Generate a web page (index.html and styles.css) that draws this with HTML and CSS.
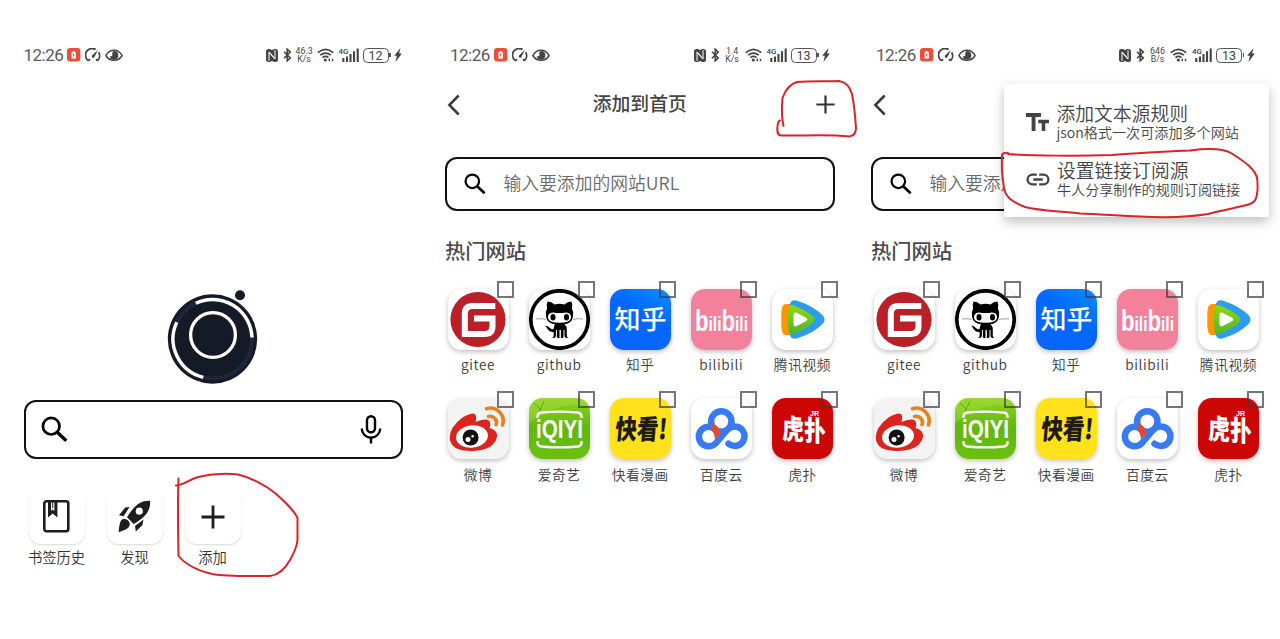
FILE: index.html
```
<!DOCTYPE html>
<html lang="zh-CN">
<head>
  <meta charset="UTF-8">
  <title>添加到首页</title>
  <meta name="viewport" content="width=device-width, initial-scale=1.0">
  <link rel="stylesheet" href="styles.css">
</head>
<body>

  <svg class="defs" width="0" height="0">
    <defs>
      <linearGradient id="g-zhihu" x1="1" y1="0" x2="0.4" y2="1">
        <stop offset="0" stop-color="#0d8dff"/><stop offset="0.5" stop-color="#0068ff"/><stop offset="1" stop-color="#0a66fb"/>
      </linearGradient>
      <linearGradient id="g-iqiyi" x1="0" y1="0" x2="0" y2="1">
        <stop offset="0" stop-color="#8fd321"/><stop offset="0.5" stop-color="#5fb80c"/><stop offset="1" stop-color="#6cc010"/>
      </linearGradient>
      <linearGradient id="g-green" x1="0" y1="0" x2="0" y2="1">
        <stop offset="0" stop-color="#93d70c"/><stop offset="1" stop-color="#4fb62c"/>
      </linearGradient>
    </defs>

    <!-- status bar -->
    <symbol id="i-lock" viewBox="0 0 14 14">
      <rect width="13.4" height="13.6" rx="3" fill="#e8503a"/>
      <path d="M5.7 3h2v1.2h1.2v6.2H4.5V4.2h1.2z" fill="#fff"/>
      <path d="M6.7 5.8v2.8" stroke="#e8503a" stroke-width="1.1"/>
    </symbol>
    <symbol id="i-gauge" viewBox="0 0 16 14">
      <path d="M3.6 12.7A6.5 6.5 0 0 1 10.6 1.5M13.6 4.3a6.5 6.5 0 0 1-1.2 8.4M3.6 12.7l1.3-1.5M12.4 12.7L11.1 11.2" fill="none" stroke="#444" stroke-width="1.8"/>
      <path d="M13 1.8L9.3 9.2A1.4 1.4 0 0 1 7 7.6z" fill="#444"/>
    </symbol>
    <symbol id="i-eye" viewBox="0 0 18 13">
      <path d="M.9 6.5C4.6-.5 13.4-.5 17.1 6.5 13.4 12.9 4.6 12.9.9 6.5z" fill="none" stroke="#444" stroke-width="1.5"/>
      <path d="M9 2.1a4.3 4.3 0 1 1-4.2 5.1c1.900.5 3-.5 2.500-2.200C7.100 3.600 7.600 2.500 9 2.100z" fill="#444"/>
    </symbol>
    <symbol id="i-nfc" viewBox="0 0 12 13">
      <rect width="12" height="13" rx="2.5" fill="#444"/>
      <path d="M3 11.8V3.2l5.800 6.900M9 1.200v8.600L3.200 2.900" fill="none" stroke="#fff" stroke-width="1"/>
      <path d="M4.500 13h3M4.500 0h3" stroke="#fff" stroke-width="1.5"/>
    </symbol>
    <symbol id="i-bt" viewBox="0 0 9 14">
      <path d="M1 3.7l6.300 6.200L4.200 12.800V1.200l3.100 2.900L1 10.300" fill="none" stroke="#444" stroke-width="1.6"/>
    </symbol>
    <symbol id="i-wifi" viewBox="0 0 17 14">
      <path d="M.8 4.600Q8.500-2 16.200 4.600M3.200 7.200q5.300-4.300 10.600 0M5.500 9.600q3-2.300 6 0" fill="none" stroke="#444" stroke-width="1.7"/>
      <circle cx="8.3" cy="12" r="1.6" fill="#444"/>
      <path d="M11 12l2-1.700v3.400zM16.800 12l-2-1.700v3.400z" fill="#444"/>
    </symbol>
    <symbol id="i-signal" viewBox="0 0 20 14">
      <path d="M4.300 10v4M8 8.500V14M11.500 6v8M15 3.200V14M18.700.5V14" stroke="#444" stroke-width="2.1"/>
    </symbol>
    <symbol id="i-bolt" viewBox="0 0 8 14">
      <path d="M6.500 0L.2 7.800h2.700L1.400 14l6.500-8.500H5.100z" fill="#444"/>
    </symbol>

    <!-- app icons -->
    <symbol id="i-search" viewBox="0 0 27 27">
      <circle cx="10.2" cy="10.2" r="8.3" fill="none" stroke="#000" stroke-width="2.7"/>
      <path d="M16.500 16.500l8.800 8.300" stroke="#000" stroke-width="3.3"/>
    </symbol>
    <symbol id="i-mic" viewBox="0 0 22 29">
      <rect x="7" y="1.3" width="8" height="16" rx="4" fill="none" stroke="#000" stroke-width="2.4"/>
      <path d="M1.800 13.500a9.200 9.200 0 0 0 18.400 0M11 22.500v6" fill="none" stroke="#000" stroke-width="2.4"/>
    </symbol>
    <symbol id="i-book" viewBox="0 0 27 33">
      <rect x="1.3" y="1.3" width="24" height="30" rx="2.2" fill="none" stroke="#1d1d1d" stroke-width="2.6"/>
      <path d="M5 1.500v16l4.700-4 4.700 4v-16z" fill="#1d1d1d"/>
      <path d="M8 2.600v8.400l1.700-1.400 1.700 1.400V2.600z" fill="#fff"/>
      <path d="M9.700 2v6" stroke="#1d1d1d" stroke-width="1"/>
    </symbol>
    <symbol id="i-rocket" viewBox="0 0 33 33">
      <path fill-rule="evenodd" d="M32 .7C23 0 16.500 5 9 17.300L15.700 24C27.500 17.500 33 10 32 .7zM21.300 7.600a3.600 3.600 0 1 1 0 7.200 3.600 3.600 0 0 1 0-7.200z" fill="#1d1d1d"/>
      <path d="M11.500 7l-4.300.5L1 15.300l4.600 1zM25.500 19.500l-8.500 6.500.8 5.500 6.500-6.200zM4 19.500C6.500 18 12 20 11.800 24.500c-.5 4.200-5.500 6-11.200 7.700C1.300 27 1.500 21.500 4 19.500z" fill="#1d1d1d"/>
    </symbol>
    <symbol id="i-plus" viewBox="0 0 24 24">
      <path d="M12 .5v23M.5 12h23" stroke="currentColor" stroke-width="2.8"/>
    </symbol>
    <symbol id="i-back" viewBox="0 0 13 22">
      <path d="M11.700 1.500L2.300 11l9.400 9.500" fill="none" stroke="#3b3b3b" stroke-width="2.5"/>
    </symbol>
    <symbol id="i-tt" viewBox="0 0 23 19">
      <path d="M0 0h15v3.900H9.500V18H5.600V3.900H0zM12.200 6.800H23v3.500h-3.700V18h-3.600v-7.700h-3.500z" fill="#444"/>
    </symbol>
    <symbol id="i-link" viewBox="0 0 24 13">
      <path d="M10.800 1.600H6.500a4.900 4.900 0 0 0 0 9.800h4.300M13.200 1.600h4.300a4.900 4.900 0 0 1 0 9.800h-4.300M7.300 6.500h9.400" fill="none" stroke="#444" stroke-width="2.3"/>
    </symbol>

    <!-- site logos -->
    <symbol id="s-gitee" viewBox="0 0 61 61">
      <circle cx="30" cy="30.5" r="27.6" fill="#bb2029"/>
      <path d="M47.300 17H24.500q-7.700 0-7.700 7.700V45h20q7.700 0 7.700-7.700V29.500H26" fill="none" stroke="#fff" stroke-width="6"/>
    </symbol>
    <symbol id="s-github" viewBox="0 0 61 61">
      <circle cx="30.5" cy="30.5" r="28.7" fill="#fff" stroke="#000" stroke-width="3.7"/>
      <path d="M18.500 12.500q4 .2 7 3 5-1.400 10 0 3-2.800 7-3 1.400 3.500.4 7Q45 23 44 27.500 43 34.300 35.500 35.300q2.300 2 2.300 5.200v6.500q.2 1.500 1.700 1.800-3.500.7-4-1.500V41h-1v7q-.5 1.500-2.600 1v-8h-1.400v8q-2.300.5-2.600-1v-7h-1v6.300q-.5 2.200-4 1.500 1.700-.3 1.700-1.800v-4c-5.500.8-5.500-4-8.800-6.200 5-.2 4.800 4.300 8.800 3.200q.2-3 1.400-4.700Q18 34.300 17 27.500 16 23 18.100 19.500q-1-3.500.4-7z" fill="#000"/>
      <path d="M24 23.500q6.500 1 13 0 5.300.2 5 5.200-.3 5-11.500 5t-11.500-5q-.3-5 5-5.200z" fill="#fff"/>
      <ellipse cx="24" cy="28.3" rx="2.500" ry="3.300"/><ellipse cx="37.500" cy="28.300" rx="2.500" ry="3.300"/>
      <path d="M7 30q5-.7 10 .3M54 30q-5-.7-10 .3" fill="none" stroke="#555" stroke-width=".6"/>
    </symbol>
    <symbol id="s-zhihu" viewBox="0 0 61 61">
      <rect width="61" height="61" fill="url(#g-zhihu)"/>
    </symbol>
    <symbol id="s-bili" viewBox="0 0 61 61">
      <rect width="61" height="61" fill="#f4819c"/>
    </symbol>
    <symbol id="s-tencent" viewBox="0 0 61 61">
      <path d="M13.500 15Q9.500 15 9.300 25v11q.2 10 4.200 10h6V15z" fill="#ff9600"/>
      <path d="M18 14.500q2-5 8-2.500 15 5 24.500 14 4 4.500 0 9-9.500 9.500-24.500 14-6 2.500-8-2.500-3-16 0-32z" fill="#2b9cf0"/>
      <path d="M16.500 19q1-4.500 6.500-2 10.500 4 18 10.500 3 3 0 6-7.500 6.500-18 11-5.500 2-6.500-2.500-1.500-11.500 0-23z" fill="url(#g-green)"/>
      <path d="M21.500 26q0-3.500 3.200-2.200L34.500 29q1.700 1.500 0 3l-9.800 5q-3.200 1.500-3.200-2z" fill="#fff"/>
    </symbol>
    <symbol id="s-weibo" viewBox="0 0 61 61">
      <rect width="61" height="61" fill="#f3f3f3"/>
      <path d="M21 16.500q6-2.500 7 1.500.5 3-.5 6 6-3 11-2.500 5.500 1 3 8.500 8.500 2.500 7.500 8.500Q46.500 52 25 53 3 53.500 1.700 40.500 1.500 29 14.500 19.500q3-2.200 6.500-3z" fill="#dc241f"/>
      <ellipse cx="24" cy="38.500" rx="16" ry="11.200" fill="#fff" transform="rotate(-7 24 38.500)"/>
      <circle cx="22.600" cy="39.500" r="8" fill="#111"/>
      <circle cx="20" cy="41.500" r="2.500" fill="#fff"/><circle cx="24.600" cy="38.300" r="1.200" fill="#fff"/>
      <path d="M38.500 10.700Q46 8.300 51.500 14t3 13M40.500 18.500q4-1 6.500 2.200t1 6" fill="none" stroke="#e58120" stroke-width="3.6" stroke-linecap="round"/>
    </symbol>
    <symbol id="s-iqiyi" viewBox="0 0 61 61">
      <rect width="61" height="61" fill="url(#g-iqiyi)"/>
      <path d="M0 25Q30 2 61 8V0H0z" fill="#b0e34b" opacity=".35"/>
      <path d="M5 5l7 7M15 3l-5 11" stroke="#4ca00c" stroke-width=".7"/>
      <path d="M8.500 20v-1.500q0-3.500 4-4 18-1.800 36 0 4 .5 4 4V20M8.500 43v1.500q0 3.500 4 4 18 1.800 36 0 4-.5 4-4V43" fill="none" stroke="#fff" stroke-width="2.4"/>
    </symbol>
    <symbol id="s-kuaikan" viewBox="0 0 61 61">
      <rect width="61" height="61" fill="#ffe11c"/>
    </symbol>
    <symbol id="s-baidu" viewBox="0 0 61 61">
      <circle cx="30.300" cy="23.500" r="10.200" fill="none" stroke="#367bf3" stroke-width="6.5"/>
      <path d="M37.500 45.800A9.800 9.800 0 1 0 36.500 31.500L24.500 45.500A9.800 9.800 0 1 1 24.500 31.500" fill="none" stroke="#367bf3" stroke-width="6.5" stroke-linecap="round"/>
      <path d="M20.800 25.500q7 2 9.200 9L24 41.500q-.5-6.500-3.200-9.500z" fill="#df4a32"/>
    </symbol>
    <symbol id="s-hupu" viewBox="0 0 61 61">
      <rect width="61" height="61" fill="#cc0505"/>
    </symbol>
  </svg>

  <main class="screens">

    <section class="phone home">
      <div class="status" data-speed="46.3" data-unit="K/s" data-battery="12"></div>
      <svg class="logo" viewBox="0 0 92 96">
        <circle cx="73" cy="6.3" r="5" fill="#151a27"/>
        <circle cx="45.5" cy="50" r="44.7" fill="#151a27"/>
        <circle cx="45.5" cy="50" r="39.5" fill="none" stroke="#202538" stroke-width="4"/>
        <circle cx="46" cy="46" r="22.4" fill="none" stroke="#fff" stroke-width="3.3"/>
        <path d="M28.800 14.200A39.500 39.500 0 0 1 85 48.500M9.800 33.200A39.500 39.500 0 0 0 36.300 88.400" fill="none" stroke="#fff" stroke-width="3.4"/>
      </svg>
      <div class="search search-home">
        <svg class="ico-search"><use href="#i-search"/></svg>
        <svg class="ico-mic"><use href="#i-mic"/></svg>
      </div>
      <nav class="shortcuts">
        <a class="shortcut"><span class="box"><svg width="27" height="33"><use href="#i-book"/></svg></span>书签历史</a>
        <a class="shortcut"><span class="box"><svg width="33" height="33"><use href="#i-rocket"/></svg></span>发现</a>
        <a class="shortcut"><span class="box"><svg width="24" height="24"><use href="#i-plus"/></svg></span>添加</a>
      </nav>
    </section>

    <section class="phone add">
      <div class="status" data-speed="1.4" data-unit="K/s" data-battery="13"></div>
      <header class="bar">
        <svg class="back"><use href="#i-back"/></svg>
        <h1>添加到首页</h1>
        <svg class="plus"><use href="#i-plus"/></svg>
      </header>
      <div class="search">
        <svg class="ico-search"><use href="#i-search"/></svg>
        <span>输入要添加的网站URL</span>
      </div>
      <h2>热门网站</h2>
      <div class="sites"></div>
    </section>

    <section class="phone add">
      <div class="status" data-speed="646" data-unit="B/s" data-battery="13"></div>
      <header class="bar">
        <svg class="back"><use href="#i-back"/></svg>
      </header>
      <div class="search">
        <svg class="ico-search"><use href="#i-search"/></svg>
        <span>输入要添加的网站URL</span>
      </div>
      <h2>热门网站</h2>
      <div class="sites"></div>

      <div class="menu">
        <div class="menu-item">
          <svg width="23" height="19"><use href="#i-tt"/></svg>
          <div><b>添加文本源规则</b><small>json格式一次可添加多个网站</small></div>
        </div>
        <div class="menu-item">
          <svg width="24" height="13"><use href="#i-link"/></svg>
          <div><b>设置链接订阅源</b><small>牛人分享制作的规则订阅链接</small></div>
        </div>
      </div>
    </section>

    <!-- hand-drawn marks -->
    <svg class="marks" viewBox="0 0 1280 639">
      <path d="M178.500 478.500C177.500 505 178 530 178.500 556C184 563 197 571 212 574C230 577 250 576 270 576C279 575 285 569 290 560C294 553 297 547 297.500 540V518C294 510 285 502 275 493C264 484 249 477 238 474.500C225 473 207 474 195 478C188 481 183 485 176 485.500"/>
      <path d="M783.500 126C781 115 782 104 782.500 98C785 91 790 84 797 82C810 81 825 81.500 839 81C846 82 850 87 852 94C854 104 855 113 856 128C856 133 854 136 849 136.500C827 134 803 136 781 135.500C777 135 777 131 777.500 126C778 123 778 121 780 120.500"/>
      <path d="M1008 154C1030 156 1080 156 1112 155C1140 153 1170 151 1190 150.500C1205 148.500 1222 148 1231 153C1239 158 1247 163 1252 169C1257 174 1258 178 1257.500 190C1257 197 1256 202 1250 204C1240 207 1225 210 1208 214C1190 217 1160 217.500 1140 216.500C1120 216 1100 214 1080 213.500C1060 211 1040 211 1025 207C1012 202 1004 197 1003.500 184C1001 172 1002 160 1002 155C1003 153 1005 152.500 1008 153"/>
    </svg>
  </main>

  <script>
    // id, name, lettering drawn over the tile
    const sites = [
      ["gitee", "gitee", ""],
      ["github", "github", ""],
      ["zhihu", "知乎", `<text x="30.5" y="39.5" class="t-zhihu">知乎</text>`],
      ["bili", "bilibili", `<text x="4" y="41.5" class="t-bili" textLength="53" lengthAdjust="spacingAndGlyphs"><tspan class="big">b</tspan>ili<tspan class="big">b</tspan>ili</text>`],
      ["tencent", "腾讯视频", ""],
      ["weibo", "微博", ""],
      ["iqiyi", "爱奇艺", `<text x="7" y="40" class="t-iqiyi" textLength="47" lengthAdjust="spacingAndGlyphs">iQIYI</text>`],
      ["kuaikan", "快看漫画", `<text x="8" y="41" class="t-kuaikan" textLength="52" lengthAdjust="spacingAndGlyphs" transform="skewX(-5)">快看!</text>`],
      ["baidu", "百度云", ""],
      ["hupu", "虎扑", `<text x="10" y="40" class="t-hupu" textLength="44" lengthAdjust="spacingAndGlyphs" transform="skewY(4)">虎扑</text><text x="38" y="18" class="t-jr">JR</text>`]
    ];

    document.querySelectorAll(".sites").forEach(el => {
      el.innerHTML = sites.map(([id, nome, testo]) => `
        <div class="site">
          <div class="tile"><svg><use href="#s-${id}"/>${testo}</svg></div>
          <i class="check"></i>
          <span>${nome}</span>
        </div>`).join("");
    });

    document.querySelectorAll(".status").forEach(el => {
      const { speed, unit, battery } = el.dataset;
      el.innerHTML = `
        <div class="status-left">
          <span class="time">12:26</span>
          <svg class="st-lock"><use href="#i-lock"/></svg>
          <svg class="st-gauge"><use href="#i-gauge"/></svg>
          <svg class="st-eye"><use href="#i-eye"/></svg>
        </div>
        <div class="status-right">
          <svg class="st-nfc"><use href="#i-nfc"/></svg>
          <svg class="st-bt"><use href="#i-bt"/></svg>
          <span class="speed">${speed}<br>${unit}</span>
          <svg class="st-wifi"><use href="#i-wifi"/></svg>
          <span class="signal"><em>4G</em><svg><use href="#i-signal"/></svg></span>
          <span class="battery">${battery}</span>
          <svg class="st-bolt"><use href="#i-bolt"/></svg>
        </div>`;
    });
  </script>

</body>
</html>
```
FILE: styles.css
```
* {
  box-sizing: border-box;
}

body {
  margin: 0;
  background: #fff;
  color: #444;
  font-family: "Noto Sans CJK SC", "Noto Sans", sans-serif;
  overflow: hidden;
}

svg {
  display: block;
  flex: none;
}

.defs {
  position: absolute;
}

.screens {
  position: relative;
  display: grid;
  grid-template-columns: 426.5px 426px 427.5px;
  width: 1280px;
  height: 639px;
}

.phone {
  position: relative;
  display: flex;
  flex-direction: column;
}

/* status bar */
.status {
  display: flex;
  justify-content: space-between;
  align-items: center;
  height: 20px;
  margin-top: 45px;
  padding: 0 0 0 23.5px;
}

.status-left,
.status-right {
  display: flex;
  align-items: center;
}

.status-right {
  width: 161px;
}

.add .status-right {
  width: 159px;
}

.add:last-of-type .status-right {
  width: 161px;
}

.time {
  width: 43.5px;
  font-family: Roboto, sans-serif;
  font-size: 17px;
  letter-spacing: -0.5px;
  line-height: 20px;
  color: #5a5a5a;
}

.st-lock { width: 14px; height: 14px; margin-right: 4px; }
.st-gauge { width: 16px; height: 14px; margin-right: 4px; }
.st-eye { width: 18px; height: 13px; }
.st-nfc { width: 12px; height: 13px; margin-right: 5px; }
.st-bt { width: 9px; height: 14px; margin-right: 4px; }
.st-wifi { width: 17px; height: 14px; margin-right: 5px; }
.st-bolt { width: 8px; height: 14px; margin-left: 4px; }

.speed {
  width: 17px;
  margin-right: 4px;
  font-family: Roboto, sans-serif;
  font-size: 8.8px;
  line-height: 8px;
  text-align: center;
}

.signal {
  position: relative;
  width: 20px;
  height: 14px;
  margin-right: 4px;
}

.signal svg {
  width: 20px;
  height: 14px;
}

.signal em {
  position: absolute;
  left: 0;
  top: 0;
  font: 500 8px/8px Roboto, sans-serif;
}

.battery {
  position: relative;
  width: 26px;
  height: 15px;
  border: 1px solid #555;
  border-radius: 4.5px;
  font: 12.5px/13px Roboto, sans-serif;
  text-align: center;
  margin-right: 1px;
}

.battery::after {
  content: "";
  position: absolute;
  right: -3px;
  top: 4.5px;
  width: 1.5px;
  height: 4px;
  background: #555;
}

/* home screen */
.logo {
  width: 92px;
  height: 96px;
  margin: 224px 0 0 167px;
}

.search {
  display: flex;
  align-items: center;
  width: 390px;
  height: 54px;
  margin: 32px 0 0 18.5px;
  padding: 0 17px;
  border: 2px solid #111;
  border-radius: 12px;
  font-size: 17.8px;
  font-weight: 350;
  line-height: 26px;
  color: #6a6a6a;
}

.search span {
  margin-top: -4px;
}

.search .ico-search {
  width: 22px;
  height: 22px;
  margin-right: 17.5px;
}

.search-home {
  justify-content: space-between;
  width: 379px;
  height: 59px;
  margin: 15px 0 0 23.5px;
  padding: 0 19px 0 15.5px;
}

.search-home .ico-search {
  width: 27px;
  height: 27px;
  margin-top: -1px;
}

.ico-mic {
  width: 22px;
  height: 29px;
  margin-top: -1px;
}

.shortcuts {
  display: flex;
  margin: 29px 0 0 17.5px;
}

.shortcut {
  display: flex;
  flex-direction: column;
  align-items: center;
  width: 78px;
  font-size: 14.3px;
  font-weight: 350;
  line-height: 20px;
  color: #333;
}

.box {
  display: flex;
  align-items: center;
  justify-content: center;
  width: 56px;
  height: 56px;
  margin-bottom: 2.5px;
  padding-top: 1px;
  border-radius: 12px;
  color: #1d1d1d;
  box-shadow: 0 1px 2px rgba(0, 0, 0, 0.16);
  clip-path: inset(8px -3px -5px -3px);
}

/* add screen */
.bar {
  display: flex;
  align-items: center;
  height: 39px;
  margin-top: 20px;
  padding: 0 18px 0 20.5px;
}

.add .search {
  margin-top: 33px;
}

.back {
  width: 13px;
  height: 22px;
}

.plus {
  width: 19px;
  height: 19px;
  color: #333;
}

h1 {
  flex: 1;
  margin: -4px 0 0;
  padding-left: 4px;
  text-align: center;
  font-size: 18.8px;
  font-weight: 500;
  color: #444;
}

h2 {
  margin: 23.5px 0 0 18.5px;
  font-size: 20.3px;
  font-weight: 500;
  line-height: 30px;
  color: #4a4a4a;
}

.sites {
  display: grid;
  grid-template-columns: repeat(5, 81.1px);
  grid-auto-rows: 109.5px;
  margin: 24px 0 0 11px;
}

.site {
  position: relative;
  display: flex;
  flex-direction: column;
  align-items: center;
  font-size: 13.7px;
  font-weight: 350;
  letter-spacing: 0.6px;
  line-height: 20px;
  color: #3c3c3c;
}

.tile {
  width: 61px;
  height: 61px;
  margin-bottom: 4.5px;
  border-radius: 14px;
  background: #fff;
  overflow: hidden;
  box-shadow: 0 2px 5px rgba(0, 0, 0, 0.25);
}

.tile svg {
  width: 61px;
  height: 61px;
}

.check {
  position: absolute;
  left: 59px;
  top: -7.5px;
  width: 17px;
  height: 17px;
  border: 2px solid rgba(60, 60, 60, 0.7);
}

.tile text {
  letter-spacing: 0;
}

.t-zhihu {
  font-size: 26px;
  font-weight: 500;
  fill: #fff;
  text-anchor: middle;
}

.t-bili {
  font: bold 21px "Liberation Sans", sans-serif;
  fill: #fff;
}

.t-bili .big {
  font-size: 30px;
}

.t-iqiyi {
  font: bold 25px "Liberation Sans", sans-serif;
  fill: #fff;
}

.t-kuaikan {
  font-size: 27px;
  font-weight: 900;
  fill: #1d1a10;
}

.t-hupu {
  font-size: 28px;
  font-weight: 900;
  fill: #fff;
}

.t-jr {
  font: bold 7px "Liberation Sans", sans-serif;
  fill: #fff;
}

/* popup menu */
.menu {
  position: absolute;
  left: 151.5px;
  top: 84px;
  width: 265px;
  height: 133px;
  padding: 17px 0 0 22px;
  background: #fff;
  border-radius: 3px;
  box-shadow: 0 5px 12px rgba(0, 0, 0, 0.25);
}

.menu-item {
  display: flex;
  align-items: center;
  height: 42px;
  margin-bottom: 15px;
}

.menu-item svg {
  margin-right: 7px;
}

.menu-item div {
  margin: -3px 0 0 auto;
  width: 212.5px;
}

.menu b,
.menu small {
  display: block;
  white-space: nowrap;
}

.menu b {
  font-size: 18.8px;
  line-height: 23px;
  font-weight: 350;
}

.menu small {
  font-size: 14.1px;
  line-height: 16px;
  font-weight: 350;
}

.marks {
  position: absolute;
  left: 0;
  top: 0;
  width: 1280px;
  height: 639px;
  pointer-events: none;
}

.marks path {
  fill: none;
  stroke: #d8252a;
  stroke-width: 2;
  stroke-linecap: round;
  stroke-linejoin: round;
}
```
